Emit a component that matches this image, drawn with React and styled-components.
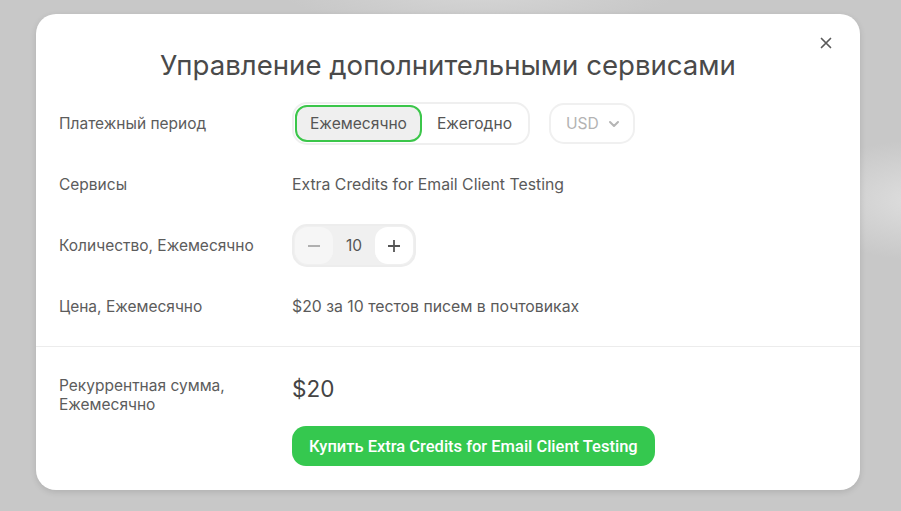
import React, { useState } from "react";
import styled, { createGlobalStyle } from "styled-components";

const GlobalStyle = createGlobalStyle`
  html, body {
    margin: 0;
    padding: 0;
  }
  body {
    font-family: Inter, "Noto Sans", sans-serif;
    background: #c9c9c9;
  }
`;

const Page = () => {
  const [period, setPeriod] = useState("month");
  const [count, setCount] = useState(10);

  return (
    <>
      <GlobalStyle />
      <Backdrop>
        <Modal>
          <Close aria-label="Закрыть">
            <svg width="14" height="14" viewBox="0 0 14 14">
              <path d="M2.5 2.5 L11.5 11.5 M11.5 2.5 L2.5 11.5" stroke="#5a5a5a" strokeWidth="1.7" strokeLinecap="round" />
            </svg>
          </Close>
          <Title>Управление дополнительными сервисами</Title>
          <Body>
            <Row>
              <Label>Платежный период</Label>
              <Controls>
                <Segmented>
                  <Segment $active={period === "month"} onClick={() => setPeriod("month")}>
                    Ежемесячно
                  </Segment>
                  <Segment $active={period === "year"} onClick={() => setPeriod("year")}>
                    Ежегодно
                  </Segment>
                </Segmented>
                <Select>
                  USD
                  <svg width="12" height="8" viewBox="0 0 12 8">
                    <path d="M2 2 L6 6 L10 2" fill="none" stroke="#b5b5b5" strokeWidth="2" strokeLinecap="round" strokeLinejoin="round" />
                  </svg>
                </Select>
              </Controls>
            </Row>
            <Row>
              <Label>Сервисы</Label>
              <Value>Extra Credits for Email Client Testing</Value>
            </Row>
            <Row>
              <Label>Количество, Ежемесячно</Label>
              <Stepper>
                <StepButton $disabled={count <= 10} onClick={() => setCount(Math.max(10, count - 10))}>
                  <svg width="14" height="14" viewBox="0 0 14 14">
                    <path d="M1 7 H13" stroke="#b0b0b0" strokeWidth="1.8" />
                  </svg>
                </StepButton>
                <Count>{count}</Count>
                <StepButton onClick={() => setCount(count + 10)}>
                  <svg width="14" height="14" viewBox="0 0 14 14">
                    <path d="M1 7 H13 M7 1 V13" stroke="#555" strokeWidth="1.8" />
                  </svg>
                </StepButton>
              </Stepper>
            </Row>
            <Row>
              <Label>Цена, Ежемесячно</Label>
              <Value>$20 за 10 тестов писем в почтовиках</Value>
            </Row>
          </Body>
          <Footer>
            <Label>
              Рекуррентная сумма,
              <br />
              Ежемесячно
            </Label>
            <Summary>
              <Amount>${count * 2}</Amount>
              <BuyButton>Купить Extra Credits for Email Client Testing</BuyButton>
            </Summary>
          </Footer>
        </Modal>
      </Backdrop>
    </>
  );
};

export default Page;

const Backdrop = styled.div`
  width: 901px;
  height: 511px;
  box-sizing: border-box;
  padding: 14px 41px 21px 36px;
  background:
    radial-gradient(ellipse 120px 60px at 920px 200px, #dedede 0%, rgba(222,222,222,0) 100%),
    radial-gradient(ellipse 200px 40px at 480px -10px, #d6d6d6 0%, rgba(214,214,214,0) 100%),
    #c8c8c8;
`;

const Modal = styled.div`
  position: relative;
  height: 100%;
  background: #fff;
  border-radius: 20px;
  box-shadow: 0 2px 6px rgba(0, 0, 0, 0.12);
  display: flex;
  flex-direction: column;
  overflow: hidden;
`;

const Close = styled.button`
  position: absolute;
  top: 17px;
  right: 22px;
  width: 24px;
  height: 24px;
  padding: 0;
  border: none;
  background: transparent;
  display: flex;
  align-items: center;
  justify-content: center;
  cursor: pointer;
`;

const Title = styled.h1`
  margin: 35px 0 0;
  text-align: center;
  font-size: 27.6px;
  font-weight: 400;
  line-height: 32px;
  color: #4a4a4a;
`;

const Body = styled.div`
  display: flex;
  flex-direction: column;
  gap: 19px;
  padding: 21px 23px 19px;
  border-bottom: 1px solid #ececec;
`;

const Row = styled.div`
  display: grid;
  grid-template-columns: 233px 1fr;
  align-items: center;
  min-height: 41px;
`;

const Label = styled.div`
  font-size: 15.5px;
  line-height: 19px;
  color: #5c5c5c;
`;

const Value = styled.div`
  font-size: 15.8px;
  color: #5a5a5a;
`;

const Controls = styled.div`
  display: flex;
  align-items: center;
  gap: 19px;
`;

const Segmented = styled.div`
  display: flex;
  padding: 1px;
  border: 2px solid #efefef;
  border-radius: 15px;
  background: #fff;
`;

const Segment = styled.button`
  height: 37px;
  padding: 0 13px;
  font-family: inherit;
  font-size: 15.6px;
  color: #555;
  border-radius: 12px;
  cursor: pointer;
  border: 2px solid ${({ $active }) => ($active ? "#3bc64a" : "transparent")};
  background: ${({ $active }) => ($active ? "#efefef" : "#fff")};
`;

const Select = styled.div`
  height: 37px;
  display: flex;
  align-items: center;
  gap: 9px;
  padding: 0 13px 0 15px;
  border: 2px solid #f0f0f0;
  border-radius: 15px;
  font-size: 15.6px;
  color: #b3b3b3;
`;

const Stepper = styled.div`
  justify-self: start;
  display: flex;
  align-items: center;
  padding: 1px;
  border: 2px solid #ededed;
  border-radius: 15px;
  background: #f0f0f0;
`;

const StepButton = styled.button`
  width: 38px;
  height: 37px;
  padding: 0;
  border: none;
  border-radius: 13px;
  display: flex;
  align-items: center;
  justify-content: center;
  cursor: pointer;
  background: ${({ $disabled }) => ($disabled ? "#f6f6f6" : "#fff")};
`;

const Count = styled.span`
  width: 42px;
  text-align: center;
  font-size: 15.5px;
  color: #555;
`;

const Footer = styled.div`
  display: grid;
  grid-template-columns: 233px 1fr;
  padding: 29px 23px 0;
  align-items: start;
`;

const Summary = styled.div`
  display: flex;
  flex-direction: column;
  align-items: flex-start;
  gap: 24px;
`;

const Amount = styled.div`
  font-size: 22.5px;
  line-height: 26px;
  color: #444;
`;

const BuyButton = styled.button`
  height: 40px;
  padding: 0 17px;
  border: none;
  border-radius: 14px;
  background: #35c84f;
  color: #fff;
  font-family: Roboto, Inter, sans-serif;
  font-size: 16.5px;
  font-weight: 500;
  cursor: pointer;
`;
